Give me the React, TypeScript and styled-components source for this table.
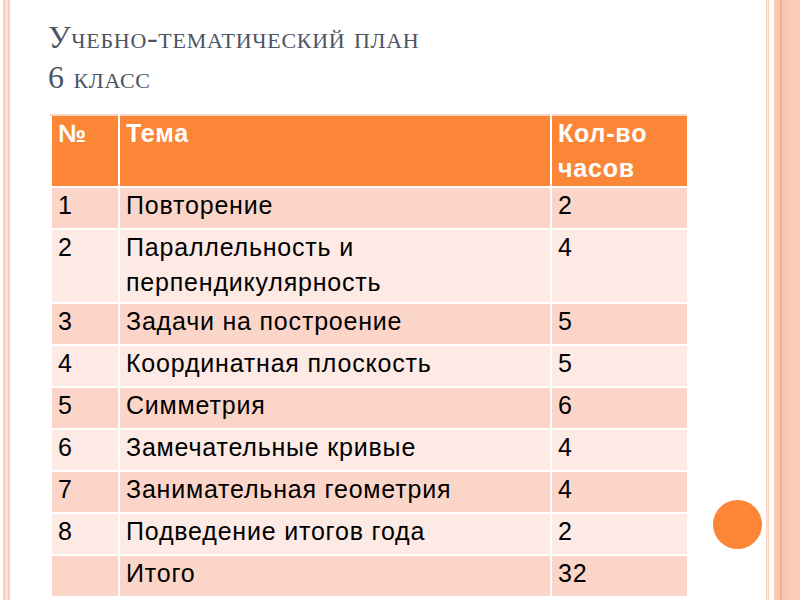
import React from 'react';
import styled, { createGlobalStyle } from 'styled-components';

type Row = {
  num: string;
  topic: React.ReactNode;
  hours: string;
  tall?: boolean;
}

const rows: Row[] = [
  { num: '1', topic: 'Повторение', hours: '2' },
  { num: '2', topic: <>Параллельность и<br />перпендикулярность</>, hours: '4', tall: true },
  { num: '3', topic: 'Задачи на построение', hours: '5' },
  { num: '4', topic: 'Координатная плоскость', hours: '5' },
  { num: '5', topic: 'Симметрия', hours: '6' },
  { num: '6', topic: 'Замечательные кривые', hours: '4' },
  { num: '7', topic: 'Занимательная геометрия', hours: '4' },
  { num: '8', topic: 'Подведение итогов года', hours: '2' },
  { num: '', topic: 'Итого', hours: '32' },
];

export default function App() {
  return (
    <>
      <GlobalStyle />
      <Slide>
        <LeftEdge />
        <Main>
          <Title>
            Учебно-тематический план<br />
            6 класс
          </Title>
          <Table>
            <colgroup>
              <col style={{ width: 68 }} />
              <col style={{ width: 432 }} />
              <col style={{ width: 137 }} />
            </colgroup>
            <thead>
              <tr>
                <HeadCell>№</HeadCell>
                <HeadCell>Тема</HeadCell>
                <HeadCell>Кол-во<br />часов</HeadCell>
              </tr>
            </thead>
            <tbody>
              {rows.map((row, i) => (
                <BodyRow key={i} $shade={i % 2 === 0 ? 'dark' : 'light'} $tall={row.tall}>
                  <Cell>{row.num}</Cell>
                  <Cell>{row.topic}</Cell>
                  <Cell>{row.hours}</Cell>
                </BodyRow>
              ))}
            </tbody>
          </Table>
        </Main>
        <RightEdge />
        <Dot />
      </Slide>
    </>
  )
}

const GlobalStyle = createGlobalStyle`
  body {
    margin: 0;
    background: #fff;
  }
`

const Slide = styled.div`
  position: relative;
  display: flex;
  width: 800px;
  height: 600px;
  overflow: hidden;
  background: #fff;
`

const LeftEdge = styled.div`
  flex: 0 0 11px;
  background: linear-gradient(to right,
    #fff 0 3px,
    #fbcdbd 3px 5px,
    #fde2d8 5px 8px,
    #fbcdbd 8px 10px,
    #fff 10px);
`

const RightEdge = styled.div`
  flex: 0 0 35px;
  background: linear-gradient(to right,
    #fff 0 1px,
    #fbcfc0 1px 2px,
    #fde6dd 2px 3px,
    #fbcfc0 3px 4px,
    #fff 4px 9px,
    #fcc7b3 9px 15px,
    #f6ad8d 15px 17px,
    #fcc5b1 17px 23px,
    #fdcab7 23px);
`

const Main = styled.div`
  flex: 1;
  padding: 17px 0 0 37px;
`

const Title = styled.h1`
  margin: 0 0 17px;
  font-family: "Liberation Serif", "DejaVu Serif", serif;
  font-weight: normal;
  font-variant: small-caps;
  font-size: 32px;
  line-height: 40px;
  letter-spacing: 0.7px;
  color: #4d5462;
`

const Table = styled.table`
  margin-left: 2px;
  width: 637px;
  border-collapse: collapse;
  table-layout: fixed;
  font-family: "Liberation Sans", Arial, sans-serif;
  font-size: 25px;
  letter-spacing: 0.8px;
`

const HeadCell = styled.th`
  background: #fb8637;
  color: #fff;
  font-weight: bold;
  text-align: left;
  vertical-align: top;
  padding: 0 6px;
  height: 68px;
  line-height: 35px;
  border: 2px solid #fff;
  border-top-color: #fbd4c4;
`

const BodyRow = styled.tr<{ $shade: 'dark' | 'light'; $tall?: boolean }>`
  background: ${p => (p.$shade === 'dark' ? '#fcd5c9' : '#fdeae4')};
  height: ${p => (p.$tall ? '74px' : '42px')};
`

const Cell = styled.td`
  color: #000;
  vertical-align: top;
  padding: 0 6px;
  line-height: 35px;
  border: 2px solid #fff;
`

const Dot = styled.div`
  position: absolute;
  left: 713px;
  top: 500px;
  width: 49px;
  height: 49px;
  border-radius: 50%;
  background: #fc8635;
`
